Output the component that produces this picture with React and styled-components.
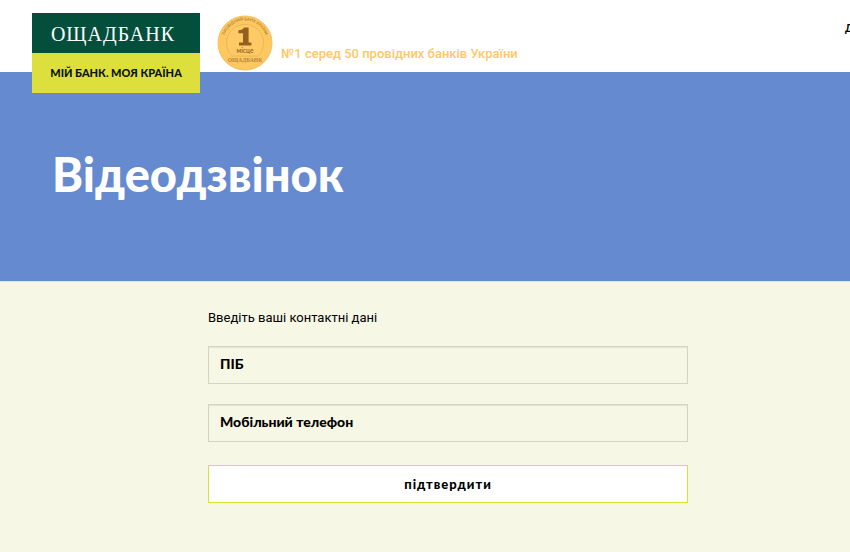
import styled, { createGlobalStyle } from "styled-components";

const App = () => {
  return (
    <>
      <GlobalStyle />
      <Header>
        <Logo href="#">
          <LogoName>ОЩАДБАНК</LogoName>
          <LogoTagline>МІЙ БАНК. МОЯ КРАЇНА</LogoTagline>
        </Logo>
        <Rating>
          <Medal />
          <RatingText>№1 серед 50 провідних банків України</RatingText>
        </Rating>
        <Nav>
          <NavLink href="#">Д</NavLink>
        </Nav>
      </Header>
      <Hero>
        <Title>Відеодзвінок</Title>
      </Hero>
      <Main>
        <Form onSubmit={(e) => e.preventDefault()}>
          <Intro>Введіть ваші контактні дані</Intro>
          <Field type="text" placeholder="ПІБ" aria-label="ПІБ" />
          <Field
            type="tel"
            placeholder="Мобільний телефон"
            aria-label="Мобільний телефон"
          />
          <SubmitButton type="submit">підтвердити</SubmitButton>
        </Form>
      </Main>
    </>
  );
};

const Medal = () => (
  <MedalIcon viewBox="0 0 56 56" aria-hidden="true">
    <defs>
      <path id="medalArc" d="M6.6 29 A21.5 21.5 0 1 1 49.4 29" />
    </defs>
    <circle cx="28" cy="28" r="27" fill="#fdc860" stroke="#f8bf57" />
    <path
      d="M15 41 A18.5 18.5 0 1 1 41 41 Z"
      fill="#fdca66"
      stroke="#eab052"
      strokeWidth="0.8"
    />
    <text fontSize="4" fontWeight="700" fill="#b5823c">
      <textPath href="#medalArc" startOffset="50%" textAnchor="middle">
        ПРОВІДНИЙ БАНК КРАЇНИ
      </textPath>
    </text>
    <path
      d="M27 12.4 H31.6 V27.6 H34.4 V30.6 H22 V27.6 H26 V18.2 H21.4 V15.2 Q25.8 15 27 12.4 Z"
      fill="#93601f"
    />
    <text
      x="28"
      y="37.6"
      fontSize="6.6"
      fontWeight="700"
      fill="#a06c28"
      textAnchor="middle"
    >
      місце
    </text>
    <text
      x="28"
      y="47"
      fontSize="5.6"
      fontFamily="Liberation Serif, serif"
      fontWeight="700"
      fill="#b5823c"
      textAnchor="middle"
    >
      ОЩАДБАНК
    </text>
  </MedalIcon>
);

const GlobalStyle = createGlobalStyle`
  * {
    box-sizing: border-box;
  }

  body {
    margin: 0;
    min-height: 100vh;
    overflow-x: hidden;
    background: #f7f7e5;
    color: #000;
    font-family: Roboto, sans-serif;
    font-size: 13px;
  }
`;

const Header = styled.header`
  position: relative;
  z-index: 1;
  display: flex;
  align-items: flex-start;
  height: 72px;
  padding: 13px 0 0 32px;
  background: #fff;
`;

const Logo = styled.a`
  flex: none;
  width: 168px;
  text-align: center;
  text-decoration: none;
`;

const LogoName = styled.span`
  display: block;
  height: 40px;
  padding-right: 6px;
  background: #044f3b;
  color: #fff;
  font-family: "Liberation Serif", serif;
  font-size: 20px;
  line-height: 42px;
  letter-spacing: 1px;
`;

const LogoTagline = styled.span`
  display: block;
  height: 40px;
  background: #dde03c;
  color: #0c1408;
  font-family: Lato, sans-serif;
  font-size: 11px;
  font-weight: 900;
  line-height: 40px;
`;

const Rating = styled.div`
  display: flex;
  flex: 1 0 auto;
  margin-left: 17px;
  padding-top: 2px;
`;

const MedalIcon = styled.svg`
  width: 56px;
  height: 56px;
  font-family: Lato, sans-serif;
`;

const RatingText = styled.span`
  margin-left: 8px;
  padding-top: 29px;
  color: #fdc966;
  font-weight: 500;
  line-height: 20px;
`;

const Nav = styled.nav`
  width: 5px;
  padding-top: 7px;
`;

const NavLink = styled.a`
  color: #000;
  font-family: Lato, sans-serif;
  font-size: 11px;
  font-weight: 700;
  line-height: 16px;
  text-decoration: none;
`;

const Hero = styled.section`
  padding: 72px 52px 77px;
  background: #658ad0;
`;

const Title = styled.h1`
  margin: 0;
  color: #fff;
  font-family: Lato, sans-serif;
  font-size: 47px;
  font-weight: 900;
  line-height: 60px;
`;

const Main = styled.main`
  padding: 26px 0 48px 46px;
  border-top: 1px solid #eeee9a;
`;

const Form = styled.form`
  display: flex;
  flex-direction: column;
  max-width: 480px;
  margin: 0 auto;
`;

const Intro = styled.p`
  margin: 0 0 18px;
  line-height: 20px;
`;

const Field = styled.input`
  height: 38px;
  margin-bottom: 20px;
  padding: 0 11px 4px;
  border: 1px solid #d3d5c4;
  border-radius: 0;
  background: transparent;
  box-shadow: inset 0 1px 1px rgba(0, 0, 0, 0.08);
  font-family: Lato, sans-serif;
  font-size: 14px;
  font-weight: 900;

  &::placeholder {
    color: #000;
    opacity: 1;
  }
`;

const SubmitButton = styled.button`
  height: 38px;
  margin-top: 3px;
  border: 1px solid #dde03c;
  background: #fff;
  color: #000;
  font-family: Lato, sans-serif;
  font-size: 13px;
  font-weight: 900;
  letter-spacing: 1px;
  cursor: pointer;
`;

export default App;
